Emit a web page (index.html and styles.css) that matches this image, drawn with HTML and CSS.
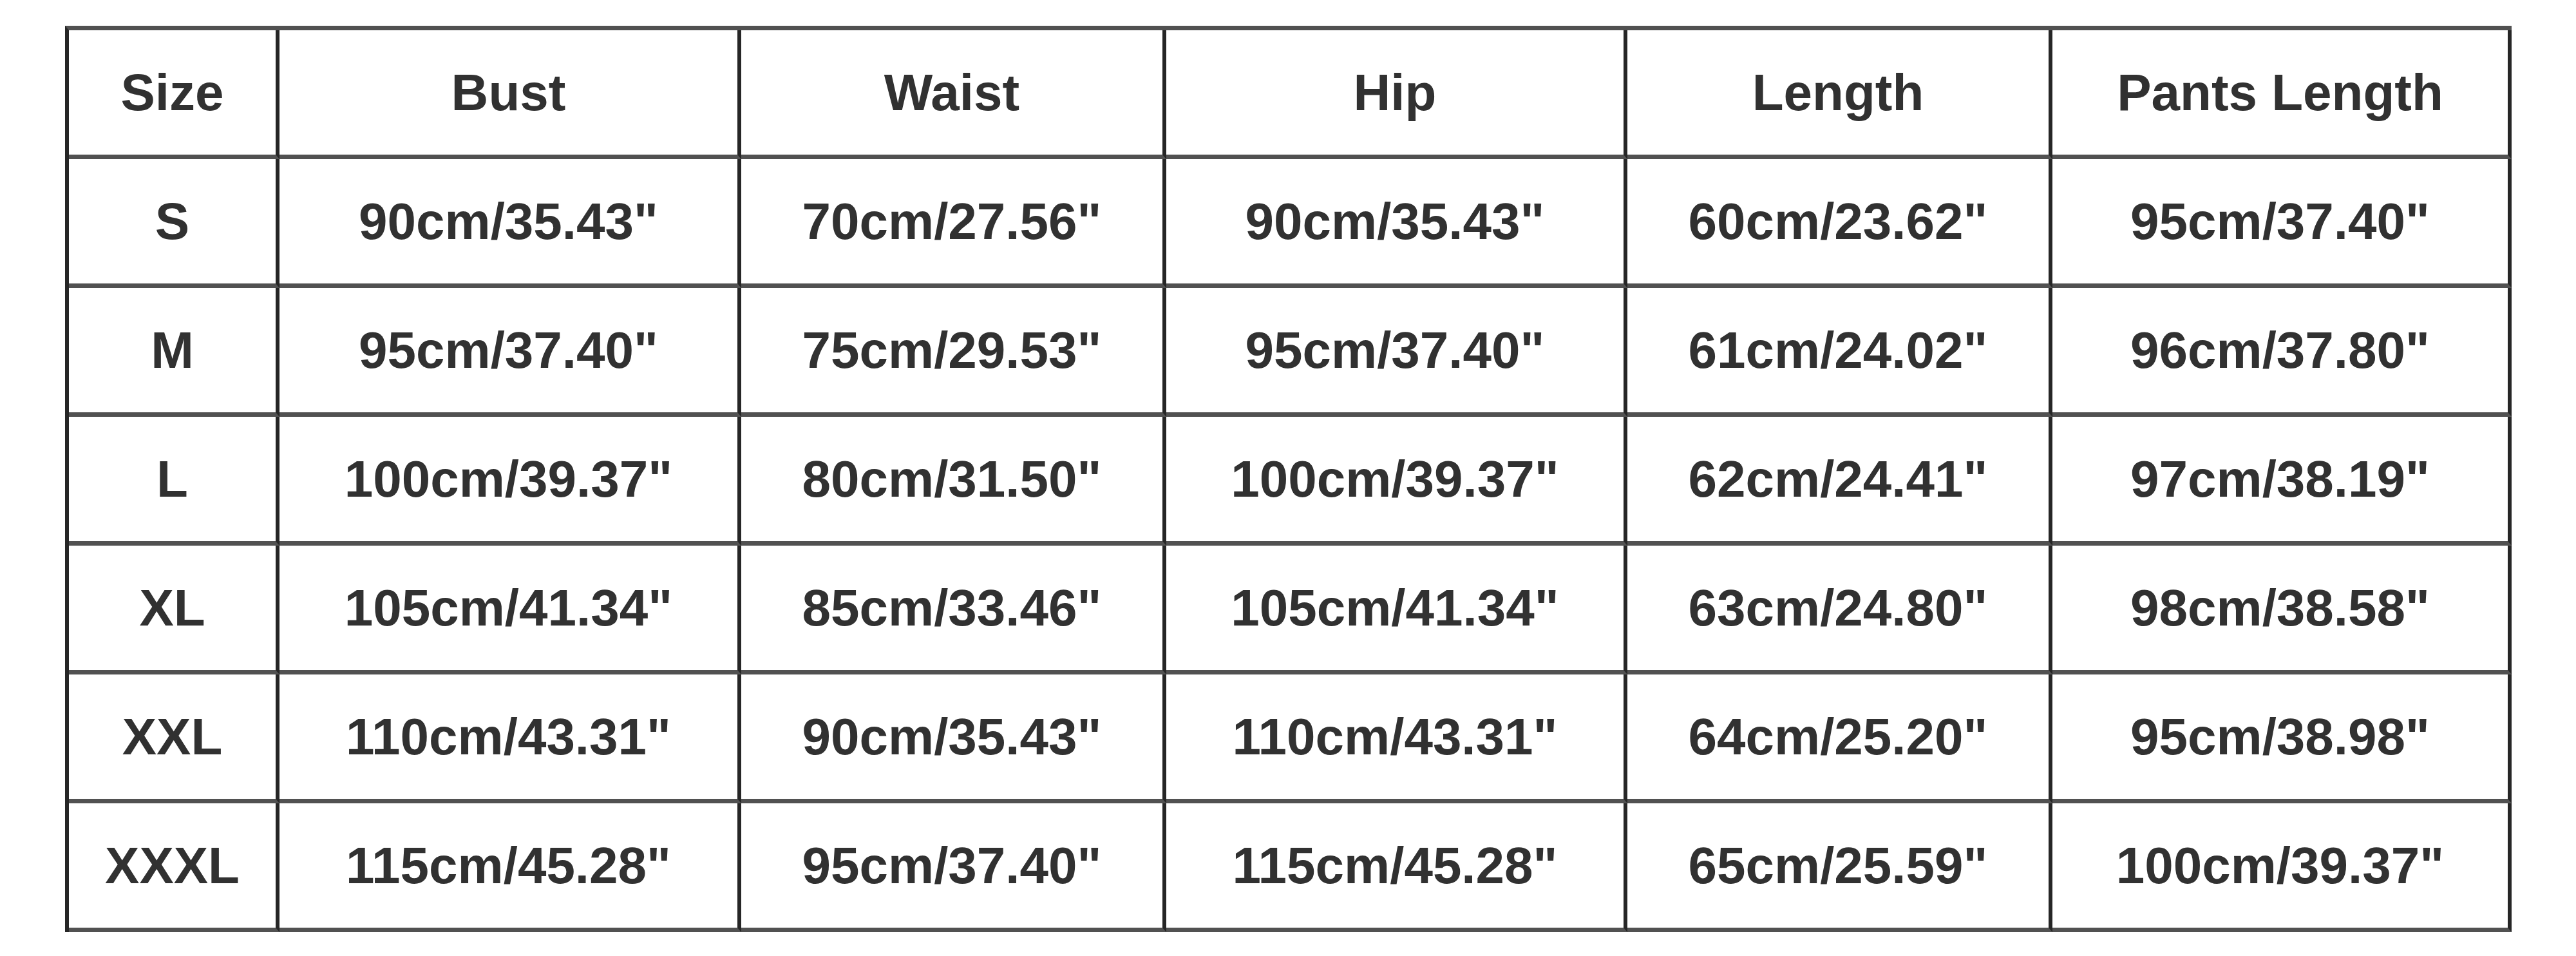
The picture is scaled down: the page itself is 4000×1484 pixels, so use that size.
FILE: index.html
```html
<!DOCTYPE html>
<html>
<head>
<meta charset="utf-8">
<link rel="stylesheet" href="styles.css">
</head>
<body>
<div class="page">
  <div class="chart">
    <div class="cell">Size</div><div class="cell">Bust</div><div class="cell">Waist</div><div class="cell">Hip</div><div class="cell">Length</div><div class="cell">Pants Length</div>
    <div class="cell">S</div><div class="cell">90cm/35.43"</div><div class="cell">70cm/27.56"</div><div class="cell">90cm/35.43"</div><div class="cell">60cm/23.62"</div><div class="cell">95cm/37.40"</div>
    <div class="cell">M</div><div class="cell">95cm/37.40"</div><div class="cell">75cm/29.53"</div><div class="cell">95cm/37.40"</div><div class="cell">61cm/24.02"</div><div class="cell">96cm/37.80"</div>
    <div class="cell">L</div><div class="cell">100cm/39.37"</div><div class="cell">80cm/31.50"</div><div class="cell">100cm/39.37"</div><div class="cell">62cm/24.41"</div><div class="cell">97cm/38.19"</div>
    <div class="cell">XL</div><div class="cell">105cm/41.34"</div><div class="cell">85cm/33.46"</div><div class="cell">105cm/41.34"</div><div class="cell">63cm/24.80"</div><div class="cell">98cm/38.58"</div>
    <div class="cell">XXL</div><div class="cell">110cm/43.31"</div><div class="cell">90cm/35.43"</div><div class="cell">110cm/43.31"</div><div class="cell">64cm/25.20"</div><div class="cell">95cm/38.98"</div>
    <div class="cell">XXXL</div><div class="cell">115cm/45.28"</div><div class="cell">95cm/37.40"</div><div class="cell">115cm/45.28"</div><div class="cell">65cm/25.59"</div><div class="cell">100cm/39.37"</div>
  </div>
</div>
</body>
</html>
```
FILE: styles.css
```css
html, body {
  margin: 0;
  padding: 0;
  background: #ffffff;
}
.page {
  padding: 40px 0 0 101px;
}
.chart {
  display: grid;
  grid-template-columns: 327px 717px 660px 716px 660px 713px;
  grid-auto-rows: 200px;
  width: max-content;
  border-left: 6px solid #262626;
  border-top: 7px solid #515151;
  font-family: "Liberation Sans", Arial, sans-serif;
  font-weight: bold;
  font-size: 80px;
  color: #313131;
}
.cell {
  box-sizing: border-box;
  display: flex;
  align-items: center;
  justify-content: center;
  border-right: 6px solid #262626;
  border-bottom: 7px solid #515151;
  white-space: nowrap;
}
```
